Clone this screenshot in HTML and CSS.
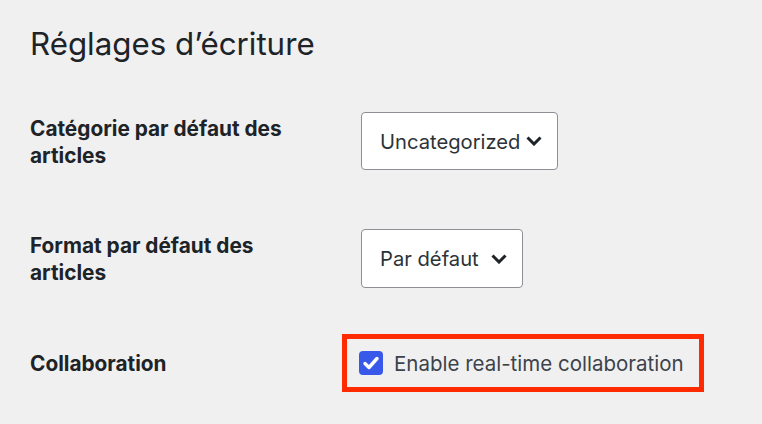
FILE: index.html
```html
<!DOCTYPE html>
<html lang="fr">
    <head>
        <meta charset="UTF-8" />
        <meta name="viewport" content="width=device-width, initial-scale=1.0" />
        <title>Réglages d’écriture</title>
        <link rel="stylesheet" href="styles.css">
    </head>
    <body>
        <div class="wrap">
            <h1>Réglages d’écriture</h1>

            <div class="form-table">
                <div class="row">
                    <label class="th" for="default_category">Catégorie par défaut des articles</label>
                    <div class="td">
                        <div class="select select-category" id="default_category">
                            <span>Uncategorized</span>
                            <svg class="chevron" viewBox="0 0 16 10" width="16" height="10"><path d="M1.5 1.5 8 8l6.5-6.5" /></svg>
                        </div>
                    </div>
                </div>

                <div class="row">
                    <label class="th" for="default_post_format">Format par défaut des articles</label>
                    <div class="td">
                        <div class="select select-format" id="default_post_format">
                            <span>Par défaut</span>
                            <svg class="chevron" viewBox="0 0 16 10" width="16" height="10"><path d="M1.5 1.5 8 8l6.5-6.5" /></svg>
                        </div>
                    </div>
                </div>

                <div class="row">
                    <div class="th">Collaboration</div>
                    <div class="td">
                        <label class="checkbox highlight">
                            <span class="box">
                                <svg viewBox="0 0 24 24" width="24" height="24"><path d="M6 12.5l4 4 8-9" /></svg>
                            </span>
                            Enable real-time collaboration
                        </label>
                    </div>
                </div>
            </div>
        </div>
    </body>
</html>
```

FILE: styles.css
```css
* {
    box-sizing: border-box;
}
html,
body {
    min-height: 100%;
}
body {
    margin: 0;
    background-color: #f0f0f1;
    color: #1d2327;
    font-family: Inter, "Noto Sans", sans-serif;
}
.wrap {
    padding: 22px 30px 40px;
}
h1 {
    margin: 0;
    font-size: 31.3px;
    font-weight: 400;
    line-height: 44px;
}
.form-table {
    display: grid;
    row-gap: 59px;
    margin-top: 46px;
}
.row {
    display: grid;
    grid-template-columns: 290px 1fr;
    column-gap: 41px;
    align-items: start;
}
.th {
    padding-top: 3px;
    font-size: 20.8px;
    font-weight: 700;
    line-height: 27px;
}
.select {
    display: flex;
    align-items: center;
    justify-content: space-between;
    height: 58px;
    padding: 0 15px 0 18px;
    background-color: #fff;
    border: 1px solid #8c8f94;
    border-radius: 4px;
    color: #2c3338;
    font-size: 20.2px;
}
.select-category {
    width: 197px;
}
.select-format {
    width: 162px;
    height: 59px;
}
.chevron {
    fill: none;
    stroke: #1d2327;
    stroke-width: 3;
}
.checkbox {
    display: inline-flex;
    align-items: center;
    gap: 11px;
    margin: 4px 0 0 -2px;
    height: 24px;
    color: #3c434a;
    font-size: 20.5px;
}
.box {
    display: block;
    width: 24px;
    height: 24px;
    border-radius: 4px;
    background-color: #3858e9;
}
.box svg {
    display: block;
    fill: none;
    stroke: #fff;
    stroke-width: 3.4;
    stroke-linecap: round;
    stroke-linejoin: round;
}
/* red annotation frame */
.highlight {
    padding-right: 3px;
    outline: 5px solid #ff2a00;
    outline-offset: 12px;
}
```
